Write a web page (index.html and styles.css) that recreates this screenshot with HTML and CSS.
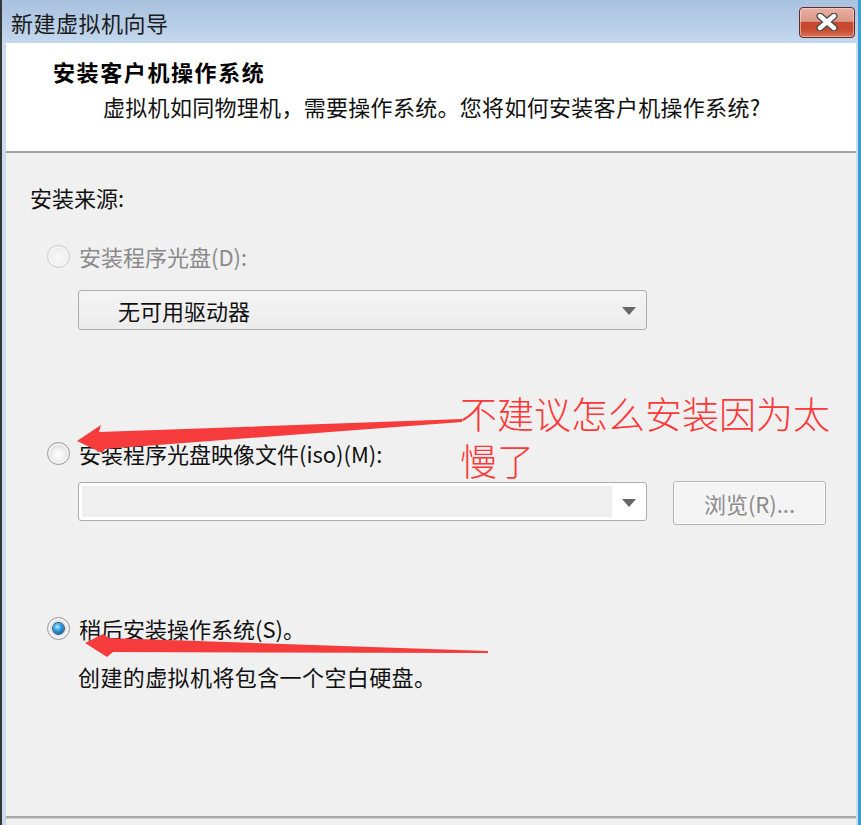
FILE: index.html
```html
<!DOCTYPE html>
<html lang="zh-CN">
<head>
<meta charset="utf-8">
<title>新建虚拟机向导</title>
<link rel="stylesheet" href="styles.css">
</head>
<body>
<div class="window">
  <div class="titlebar">
    <span class="title">新建虚拟机向导</span>
    <button class="close" aria-label="关闭">
      <svg width="26" height="18" viewBox="0 0 26 18">
        <path d="M6 3 L20 15 M20 3 L6 15" stroke="#4a4a4a" stroke-width="7" stroke-linecap="round" fill="none"/>
        <path d="M6 3 L20 15 M20 3 L6 15" stroke="#ffffff" stroke-width="4.4" stroke-linecap="round" fill="none"/>
      </svg>
    </button>
  </div>
  <div class="client">
    <div class="header">
      <div class="h-title">安装客户机操作系统</div>
      <div class="h-sub">虚拟机如同物理机，需要操作系统。您将如何安装客户机操作系统?</div>
    </div>
    <div class="body">
      <div class="src-label">安装来源:</div>

      <div class="option disabled opt1">
        <span class="radio"></span>
        <span class="label">安装程序光盘(D):</span>
      </div>
      <div class="combo combo1">
        <span class="combo-text">无可用驱动器</span>
        <span class="caret"></span>
      </div>

      <div class="option opt2">
        <span class="radio"></span>
        <span class="label">安装程序光盘映像文件(iso)(M):</span>
      </div>
      <div class="iso-row">
        <div class="combo combo2">
          <span class="edit"></span>
          <span class="caret"></span>
        </div>
        <button class="browse">浏览(R)...</button>
      </div>

      <div class="option opt3">
        <span class="radio checked"></span>
        <span class="label">稍后安装操作系统(S)。</span>
      </div>
      <div class="desc">创建的虚拟机将包含一个空白硬盘。</div>
    </div>
    <div class="footer"></div>
  </div>

  <div class="note">不建议怎么安装因为太<br>慢了</div>
  <svg class="arrows" width="861" height="825" viewBox="0 0 861 825">
    <polygon points="77,441 101,425 99,432 462,419 462,422 105,449 102,453" fill="#f53b3b"/>
    <polygon points="85,643 103,634 109,638 488,651 488,653 113,652 107,657" fill="#f53b3b"/>
  </svg>
</div>
</body>
</html>
```

FILE: styles.css
```css
* { box-sizing: border-box; }

html, body {
  margin: 0;
  padding: 0;
  background: #f0f0f0;
}

body {
  font-family: "Noto Sans CJK SC", "Microsoft YaHei", sans-serif;
  font-size: 22px;
  color: #111;
}

.window {
  position: relative;
  width: 861px;
  height: 825px;
  display: flex;
  flex-direction: column;
  border-left: 2px solid #363636;
  border-right: 3px solid #3b9fd6;
  background: #cadcef;
  overflow: hidden;
}

.titlebar {
  height: 43px;
  flex: 0 0 43px;
  display: flex;
  align-items: center;
  justify-content: space-between;
  padding: 0 3px 0 9px;
  background: linear-gradient(#a9c2df 0%, #b5cce6 50%, #c4d8ee 100%);
}

.title {
  font-size: 22px;
  line-height: 30px;
  color: #1a1a1a;
  letter-spacing: 0.5px;
}

.close {
  width: 56px;
  height: 31px;
  margin-top: 1px;
  padding: 0;
  border: 1px solid #5e2b2b;
  border-radius: 4px;
  background: linear-gradient(#e7b0a3 0%, #dc9787 46%, #c7472f 50%, #c84a30 75%, #d77257 100%);
  box-shadow: inset 0 0 0 1px rgba(255, 220, 210, 0.55);
  display: flex;
  align-items: center;
  justify-content: center;
}

.client {
  flex: 1;
  margin: 0 2px 0 3px;
  display: flex;
  flex-direction: column;
  background: #f0f0f0;
  border-left: 1px solid #d8d8d8;
}

.header {
  height: 110px;
  flex: 0 0 110px;
  background: #ffffff;
  border-bottom: 2px solid #a3a3a3;
  padding: 13px 0 0 47px;
}

.h-title {
  font-weight: bold;
  font-size: 22px;
  line-height: 30px;
  letter-spacing: 1.6px;
  color: #000;
}

.h-sub {
  margin-top: 5px;
  padding-left: 50px;
  font-size: 22px;
  line-height: 30px;
  color: #111;
  letter-spacing: 0.3px;
}

.body {
  flex: 1;
  padding: 29px 0 0 24px;
  display: flex;
  flex-direction: column;
}

.src-label {
  line-height: 30px;
  color: #111;
}

.option {
  display: flex;
  align-items: center;
  gap: 9px;
  padding-left: 17px;
  height: 30px;
  line-height: 30px;
}

.opt1 { margin-top: 29px; }
.opt2 { margin-top: 108px; }
.opt3 { margin-top: 88px; }

.option.disabled .label { color: #8a8a8a; }

.radio {
  width: 23px;
  height: 23px;
  flex: 0 0 23px;
  border-radius: 50%;
  border: 1px solid #9a9a9a;
  background: radial-gradient(circle at 50% 55%, #ffffff 0%, #f2f2f2 35%, #d6d6d6 70%, #c4c4c4 100%);
  box-shadow: inset 0 0 0 2px #f4f4f4;
  position: relative;
}

.option.disabled .radio {
  border-color: #c9c9c9;
  background: radial-gradient(circle at 50% 55%, #fbfbfb 0%, #f0f0f0 45%, #e2e2e2 100%);
  box-shadow: inset 0 0 0 2px #f6f6f6;
}

.radio.checked::after {
  content: "";
  position: absolute;
  left: 5px;
  top: 5px;
  width: 11px;
  height: 11px;
  border-radius: 50%;
  background: radial-gradient(circle at 40% 35%, #b9ecff 0%, #3aa6e6 35%, #14639f 75%, #0b3f6e 100%);
  box-shadow: 0 0 0 1px #1b4f7d;
}

.combo {
  position: relative;
  height: 40px;
  width: 569px;
  border: 1px solid #acacac;
  border-radius: 3px;
  display: flex;
  align-items: center;
}

.combo1 {
  margin-top: 19px;
  margin-left: 48px;
  background: linear-gradient(#f4f4f4, #ececec);
}

.combo-text {
  padding-left: 39px;
  line-height: 30px;
  color: #111;
}

.caret {
  position: absolute;
  right: 10px;
  top: 50%;
  margin-top: -3px;
  width: 0;
  height: 0;
  border-left: 7px solid transparent;
  border-right: 7px solid transparent;
  border-top: 8px solid #666;
}

.iso-row {
  margin-top: 13px;
  margin-left: 48px;
  display: flex;
  align-items: flex-start;
  gap: 26px;
}

.combo2 {
  margin-top: 1px;
  height: 39px;
  background: #ffffff;
  padding: 3px;
}

.edit {
  width: 530px;
  height: 100%;
  background: #efefef;
}

.browse {
  width: 153px;
  height: 44px;
  border: 1px solid #b4b4b4;
  border-radius: 3px;
  background: #f4f4f4;
  box-shadow: inset 0 0 0 1px #fbfbfb;
  font-family: "Noto Sans CJK SC", sans-serif;
  font-size: 22px;
  color: #8b8b8b;
  padding: 0;
}

.desc {
  margin-top: 18px;
  margin-left: 48px;
  line-height: 30px;
  color: #111;
  letter-spacing: 0.4px;
}

.footer {
  height: 9px;
  flex: 0 0 9px;
  border-top: 2px solid #a8a8a8;
  box-shadow: inset 0 1px 0 #cfcfcf;
  background: #f0f0f0;
}

.note {
  position: absolute;
  left: 458px;
  top: 390px;
  font-size: 37px;
  line-height: 47px;
  color: #ff3838;
  font-weight: 300;
  white-space: nowrap;
}

.arrows {
  position: absolute;
  left: -2px;
  top: 0;
  pointer-events: none;
}
```
